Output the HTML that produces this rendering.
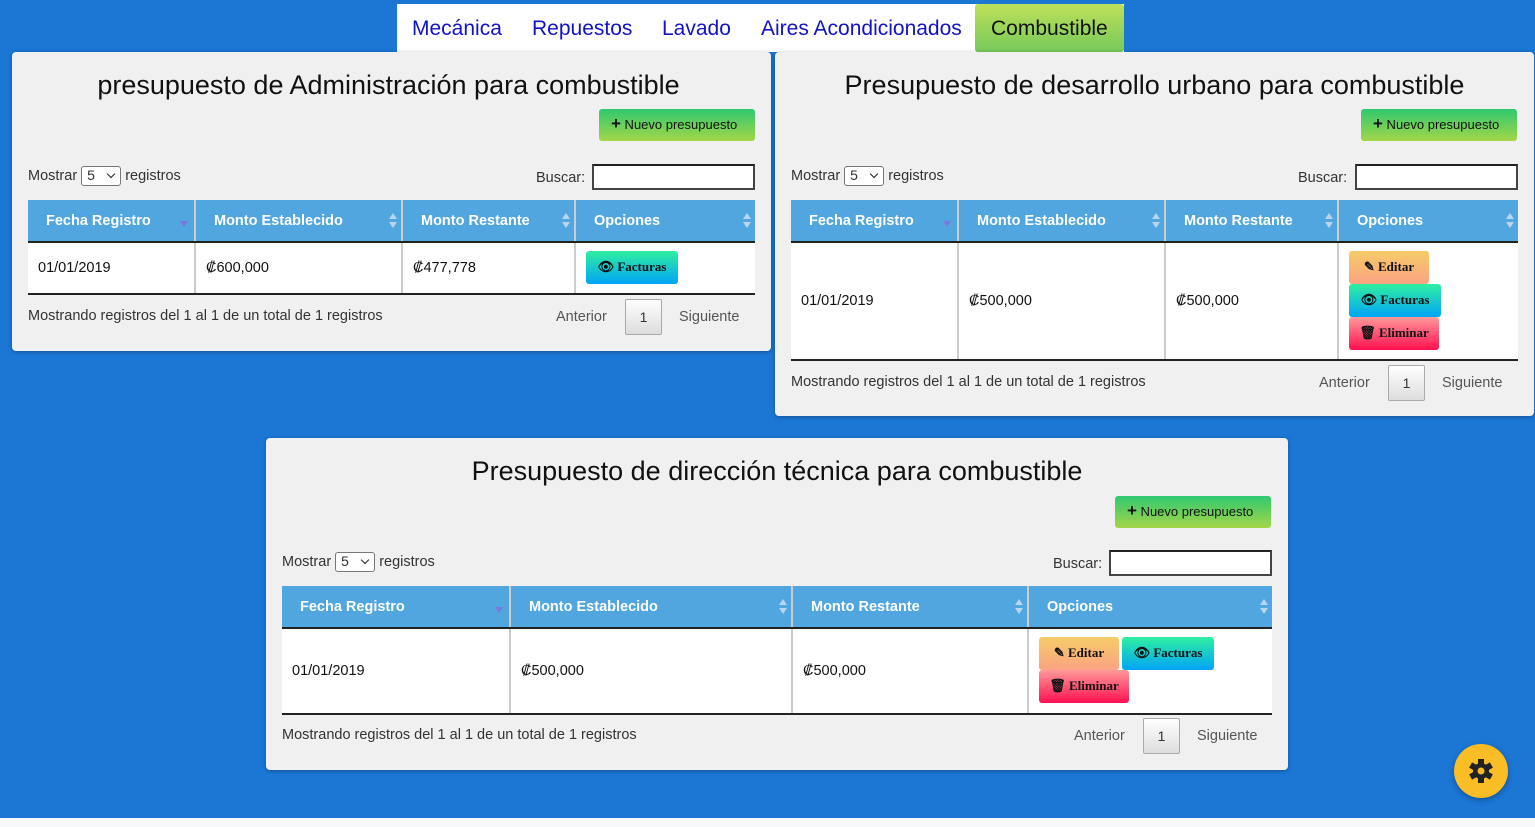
<!DOCTYPE html>
<html><head><meta charset="utf-8"><style>
*{box-sizing:border-box;margin:0;padding:0}
body{width:1535px;height:827px;background:#1b76d4;font-family:"Liberation Sans",sans-serif;position:relative;overflow:hidden}
.abs{position:absolute}
.strip{left:0;top:818px;width:1535px;height:9px;background:#f7f8fa}
.nav{left:397px;top:4px;width:727px;height:48px;background:#fff}
.nav span{position:absolute;top:13px;font-size:21px;color:#1212c8}
.nav .act{left:578px;top:0;width:149px;height:48px;background:linear-gradient(#bfe05a,#76c95a);color:#111;padding:13px 0 0 16px;border-radius:3px}
.panel{background:#f0f0f0;border-radius:4px;box-shadow:0 1px 4px rgba(0,0,0,.3)}
.title{font-size:27px;color:#111;text-align:center;width:100%;top:18px}
.newb{height:32px;width:156px;background:linear-gradient(#2fc870,#a4d648);border-radius:3px;font-size:13px;color:#111;padding:8px 0 0 12px}
.newb b{font-size:17px;line-height:10px}
.lbl{font-size:14.5px;color:#333}
.sel{display:inline-block;width:40px;height:20px;border:1px solid #777;border-radius:3px;background:#fff;vertical-align:middle;font-size:14px;padding-left:5px;position:relative}
.sel:after{content:"";position:absolute;right:6px;top:4px;width:5px;height:5px;border-right:1.8px solid #222;border-bottom:1.8px solid #222;transform:rotate(45deg)}
.inp{height:26px;width:163px;border:2px solid #444;border-top-color:#222;background:#fff}
table{position:absolute;border-collapse:collapse;background:#fff;table-layout:fixed}
th{background:#51a6e0;color:#fff;font-size:14.5px;text-align:left;height:42px;padding-left:18px;border-left:2px solid #ccc;position:relative;border-bottom:2px solid #222}
th:first-child{border-left:none}
th:after{content:"";position:absolute;right:4px;top:13px;width:0;height:0;border-left:4px solid transparent;border-right:4px solid transparent;border-bottom:6px solid #b9d6ee}
th:before{content:"";position:absolute;right:4px;top:22px;width:0;height:0;border-left:4px solid transparent;border-right:4px solid transparent;border-top:6px solid #b9d6ee}
th.s:after{display:none}
th.s:before{border-top-color:#7a78e0;top:21px;right:6px}
td{font-size:14.5px;color:#111;padding-left:10px;border-left:2px solid #ccc;border-bottom:2px solid #222;vertical-align:middle}
td:first-child{border-left:none}
.btn{position:absolute;font-family:"Liberation Serif",serif;font-weight:bold;font-size:13px;color:#111;border-radius:3px;text-align:center;line-height:32px;height:33px}
.ed{background:linear-gradient(#f6cc68,#fba282);width:80px}
.fa{background:linear-gradient(#2ff0a0,#00a4f6);width:92px}
.el{background:linear-gradient(#ff9a9a,#ff1050);width:90px}
.pg{font-size:14.5px;color:#555}
.pbox{width:37px;height:36px;border:1px solid #aaa;border-radius:2px;background:linear-gradient(#fff,#ddd);text-align:center;line-height:34px;font-size:14px;color:#333}
.gear{left:1454px;top:744px;width:54px;height:54px;border-radius:50%;background:#fbbd26;box-shadow:0 2px 6px rgba(0,0,0,.3)}
</style></head><body>
<div class="abs strip"></div>
<div class="abs nav">
<span style="left:15px">Mecánica</span><span style="left:135px">Repuestos</span><span style="left:265px">Lavado</span><span style="left:364px">Aires Acondicionados</span>
<span class="act">Combustible</span></div>

<!-- Panel 1 -->
<div class="abs panel" style="left:12px;top:52px;width:759px;height:299px">
<div class="abs title" style="left:-3px">presupuesto de Administración para combustible</div>
<div class="abs newb" style="left:587px;top:57px"><b>+</b> Nuevo presupuesto</div>
<div class="abs lbl" style="left:16px;top:114px">Mostrar <span class="sel">5</span> registros</div>
<div class="abs lbl" style="left:524px;top:118px">Buscar:</div>
<div class="abs inp" style="left:580px;top:112px"></div>
<table style="left:16px;top:148px;width:727px">
<colgroup><col style="width:167px"><col style="width:207px"><col style="width:173px"><col style="width:180px"></colgroup>
<tr><th class="s">Fecha Registro</th><th>Monto Establecido</th><th>Monto Restante</th><th>Opciones</th></tr>
<tr style="height:52px"><td>01/01/2019</td><td>₡600,000</td><td>₡477,778</td><td></td></tr></table>
<div class="btn fa" style="left:574px;top:199px">👁 Facturas</div>
<div class="abs lbl" style="left:16px;top:256px">Mostrando registros del 1 al 1 de un total de 1 registros</div>
<div class="abs pg" style="left:544px;top:257px">Anterior</div>
<div class="abs pbox" style="left:613px;top:247px">1</div>
<div class="abs pg" style="left:667px;top:257px">Siguiente</div>
</div>

<!-- Panel 2 -->
<div class="abs panel" style="left:775px;top:52px;width:759px;height:364px">
<div class="abs title" style="left:0">Presupuesto de desarrollo urbano para combustible</div>
<div class="abs newb" style="left:586px;top:57px"><b>+</b> Nuevo presupuesto</div>
<div class="abs lbl" style="left:16px;top:114px">Mostrar <span class="sel">5</span> registros</div>
<div class="abs lbl" style="left:523px;top:118px">Buscar:</div>
<div class="abs inp" style="left:580px;top:112px"></div>
<table style="left:16px;top:148px;width:727px">
<colgroup><col style="width:167px"><col style="width:207px"><col style="width:173px"><col style="width:180px"></colgroup>
<tr><th class="s">Fecha Registro</th><th>Monto Establecido</th><th>Monto Restante</th><th>Opciones</th></tr>
<tr style="height:118px"><td>01/01/2019</td><td>₡500,000</td><td>₡500,000</td><td></td></tr></table>
<div class="btn ed" style="left:574px;top:199px">✎ Editar</div>
<div class="btn fa" style="left:574px;top:232px">👁 Facturas</div>
<div class="btn el" style="left:574px;top:265px">🗑 Eliminar</div>
<div class="abs lbl" style="left:16px;top:322px">Mostrando registros del 1 al 1 de un total de 1 registros</div>
<div class="abs pg" style="left:544px;top:323px">Anterior</div>
<div class="abs pbox" style="left:613px;top:313px">1</div>
<div class="abs pg" style="left:667px;top:323px">Siguiente</div>
</div>

<!-- Panel 3 -->
<div class="abs panel" style="left:266px;top:438px;width:1022px;height:332px">
<div class="abs title" style="left:0">Presupuesto de dirección técnica para combustible</div>
<div class="abs newb" style="left:849px;top:58px"><b>+</b> Nuevo presupuesto</div>
<div class="abs lbl" style="left:16px;top:114px">Mostrar <span class="sel">5</span> registros</div>
<div class="abs lbl" style="left:787px;top:118px">Buscar:</div>
<div class="abs inp" style="left:843px;top:112px"></div>
<table style="left:16px;top:148px;width:990px">
<colgroup><col style="width:228px"><col style="width:282px"><col style="width:236px"><col style="width:244px"></colgroup>
<tr><th class="s">Fecha Registro</th><th>Monto Establecido</th><th>Monto Restante</th><th>Opciones</th></tr>
<tr style="height:86px"><td>01/01/2019</td><td>₡500,000</td><td>₡500,000</td><td></td></tr></table>
<div class="btn ed" style="left:773px;top:199px">✎ Editar</div>
<div class="btn fa" style="left:856px;top:199px">👁 Facturas</div>
<div class="btn el" style="left:773px;top:232px">🗑 Eliminar</div>
<div class="abs lbl" style="left:16px;top:289px">Mostrando registros del 1 al 1 de un total de 1 registros</div>
<div class="abs pg" style="left:808px;top:290px">Anterior</div>
<div class="abs pbox" style="left:877px;top:280px">1</div>
<div class="abs pg" style="left:931px;top:290px">Siguiente</div>
</div>

<div class="abs gear"><svg width="54" height="54" viewBox="0 0 54 54"><g transform="translate(27,27)" fill="#222">
<circle r="8"/><rect x="-3" y="-12" width="6" height="24"/><rect x="-3" y="-12" width="6" height="24" transform="rotate(60)"/><rect x="-3" y="-12" width="6" height="24" transform="rotate(120)"/></g><circle cx="27" cy="27" r="3.5" fill="#fbbd26"/></svg></div>
</body></html>
